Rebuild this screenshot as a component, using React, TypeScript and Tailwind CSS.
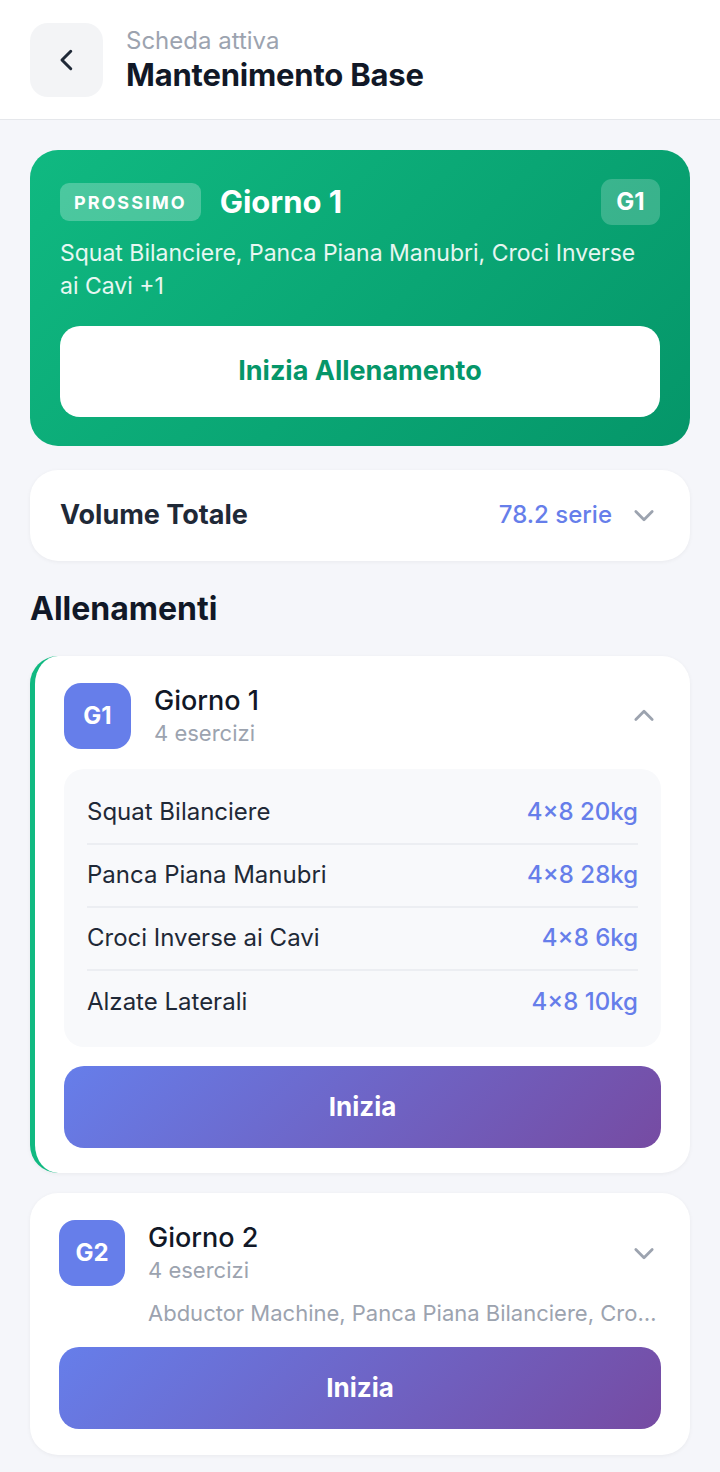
import React from "react";

const Chevron = ({ dir, className }: { dir: "left" | "down" | "up"; className?: string }) => {
  const d =
    dir === "left" ? "M15 5 L8 12 L15 19" : dir === "down" ? "M5 9 L12 16 L19 9" : "M5 15 L12 8 L19 15";
  return (
    <svg viewBox="0 0 24 24" className={className} fill="none" stroke="currentColor" strokeWidth={2.4} strokeLinecap="round" strokeLinejoin="round">
      <path d={d} />
    </svg>
  );
};

const exercises = [
  ["Squat Bilanciere", "4×8 20kg"],
  ["Panca Piana Manubri", "4×8 28kg"],
  ["Croci Inverse ai Cavi", "4×8 6kg"],
  ["Alzate Laterali", "4×8 10kg"],
];

export default function App() {
  return (
    <div className="min-h-[1472px] bg-[#f5f6fa] text-[#1f2937]" style={{ fontFamily: "Inter, 'Noto Sans', sans-serif" }}>
      <header className="bg-white border-b border-[#e5e7eb] h-[120px] flex items-center px-[30px] gap-[23px]">
        <div className="w-[73px] h-[74px] rounded-[18px] bg-[#f3f4f6] flex items-center justify-center text-[#1f2937]">
          <Chevron dir="left" className="w-[30px] h-[30px]" />
        </div>
        <div className="flex flex-col">
          <div className="text-[24px] leading-[30px] text-[#9ca3af]">Scheda attiva</div>
          <div className="text-[31px] leading-[38px] font-bold text-[#111827] tracking-[-0.2px]">Mantenimento Base</div>
        </div>
      </header>

      <main className="px-[30px] pt-[30px] flex flex-col">
        <section className="rounded-[28px] bg-[linear-gradient(135deg,#10b981,#059669)] px-[30px] pt-[29px] pb-[29px] text-white">
          <div className="flex items-center justify-between">
            <div className="flex items-center gap-[19px]">
              <span className="bg-white/25 rounded-[9px] h-[38px] px-[14px] flex items-center text-[18px] font-bold tracking-[2px]">PROSSIMO</span>
              <span className="text-[31px] font-bold">Giorno 1</span>
            </div>
            <span className="bg-white/20 rounded-[11px] w-[59px] h-[46px] flex items-center justify-center text-[24px] font-bold">G1</span>
          </div>
          <p className="mt-[11px] text-[23px] leading-[33px] text-white/90">
            Squat Bilanciere, Panca Piana Manubri, Croci Inverse ai Cavi +1
          </p>
          <button className="mt-[23px] w-full h-[91px] bg-white rounded-[20px] text-[#059669] text-[27px] font-bold">
            Inizia Allenamento
          </button>
        </section>

        <section className="mt-[24px] h-[91px] bg-white rounded-[28px] shadow-[0_1px_4px_rgba(0,0,0,0.05)] flex items-center justify-between pl-[30px] pr-[32px]">
          <span className="text-[27px] font-bold text-[#1f2937]">Volume Totale</span>
          <div className="flex items-center gap-[18px]">
            <span className="text-[24px] font-medium text-[#667eea]">78.2 serie</span>
            <Chevron dir="down" className="w-[28px] h-[28px] text-[#9ca3af]" />
          </div>
        </section>

        <h2 className="mt-[28px] text-[32px] font-bold text-[#111827] leading-[40px]">Allenamenti</h2>

        <section className="mt-[27px] bg-white rounded-[28px] border-l-[5px] border-[#10b981] shadow-[0_1px_4px_rgba(0,0,0,0.05)] pl-[29px] pr-[29px] pt-[27px] pb-[25px]">
          <div className="flex items-center">
            <div className="w-[67px] h-[66px] rounded-[17px] bg-[#667eea] flex items-center justify-center text-white text-[24px] font-bold">G1</div>
            <div className="ml-[23px] flex-1">
              <div className="text-[27px] leading-[34px] font-medium text-[#111827]">Giorno 1</div>
              <div className="text-[22px] leading-[30px] text-[#9ca3af]">4 esercizi</div>
            </div>
            <Chevron dir="up" className="w-[28px] h-[28px] text-[#9ca3af] mr-[3px]" />
          </div>
          <div className="mt-[20px] bg-[#f8f9fb] rounded-[20px] px-[23px] py-[13px]">
            {exercises.map(([n, v], i) => (
              <div key={n} className={`h-[63px] flex items-center justify-between ${i < exercises.length - 1 ? "border-b-2 border-[#eceef2]" : ""}`}>
                <span className="text-[24px] text-[#1f2937]">{n}</span>
                <span className="text-[24px] font-medium text-[#667eea]">{v}</span>
              </div>
            ))}
          </div>
          <button className="mt-[19px] w-full h-[82px] rounded-[20px] bg-[linear-gradient(135deg,#667eea,#764ba2)] text-white text-[26px] font-bold">
            Inizia
          </button>
        </section>

        <section className="mt-[20px] mb-[17px] bg-white rounded-[28px] shadow-[0_1px_4px_rgba(0,0,0,0.05)] px-[29px] pt-[27px] pb-[26px]">
          <div className="flex items-center">
            <div className="w-[66px] h-[66px] rounded-[16px] bg-[#667eea] flex items-center justify-center text-white text-[24px] font-bold">G2</div>
            <div className="ml-[23px] flex-1">
              <div className="text-[27px] leading-[34px] font-medium text-[#111827]">Giorno 2</div>
              <div className="text-[22px] leading-[30px] text-[#9ca3af]">4 esercizi</div>
            </div>
            <Chevron dir="down" className="w-[28px] h-[28px] text-[#9ca3af] mr-[3px]" />
          </div>
          <div className="ml-[89px] mt-[12px] text-[22px] leading-[30px] text-[#9ca3af] truncate">
            Abductor Machine, Panca Piana Bilanciere, Croci Inverse, Alzate Laterali
          </div>
          <button className="mt-[19px] w-full h-[82px] rounded-[20px] bg-[linear-gradient(135deg,#667eea,#764ba2)] text-white text-[26px] font-bold">
            Inizia
          </button>
        </section>
      </main>
    </div>
  );
}
